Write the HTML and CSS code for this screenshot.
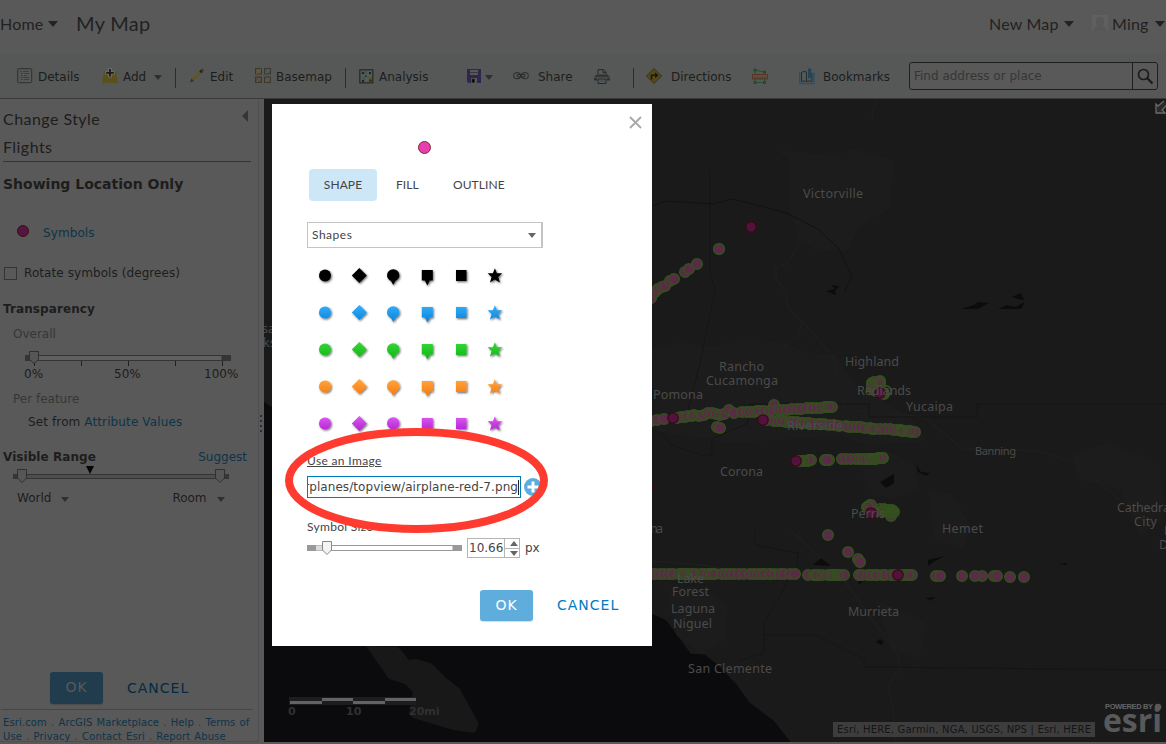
FILE: index.html
```html
<!DOCTYPE html>
<html lang="en">
<head>
<meta charset="utf-8">
<title>My Map</title>
<link rel="stylesheet" href="styles.css">
</head>
<body>
<div class="app">
  <header class="header">
    <span class="home">Home</span><i class="caret caret-dark"></i>
    <span class="map-title">My Map</span>
    <span class="new-map">New Map</span><i class="caret caret-dark"></i>
    <svg class="avatar" width="16" height="16" viewBox="0 0 16 16"><rect width="16" height="16" fill="#606060"/><path d="M1 16c0-4 4-4 4-5S4 9 4 6s1-4 4-4 4 1 4 4-1 4-1 5 4 1 4 5z" fill="#575757"/></svg>
    <span class="user">Ming</span><i class="caret caret-dark"></i>
  </header>
  <nav class="toolbar">
    <div class="tool t-details"><svg width="16" height="16" viewBox="0 0 16 16" fill="none"><rect x=".7" y=".7" width="14" height="14" rx="1" stroke="#2f3133"/><path d="M3 3.500h2m1 0h6M4 5.500h2m1 0h5M4 7.500h2m1 0h3M3 9.500h2m1 0h6M4 11.500h2m1 0h5" stroke="#26455a"/></svg><span>Details</span></div>
    <div class="tool t-add"><svg width="16" height="16" viewBox="0 0 16 16"><path d="M2 3l12 0 2 12.500q-8-2-16 0z" fill="#5b5118"/><path d="M8 0v9.500M3.200 4.800h9.600" stroke="#6c6a60" stroke-width="4"/><path d="M8 1v7.600M4.200 4.800h7.600" stroke="#1d1d1d" stroke-width="1.800"/></svg><span>Add</span><i class="caret caret-grey"></i></div>
    <i class="sep s1"></i>
    <div class="tool t-edit"><svg width="15" height="16" viewBox="0 0 15 16"><path d="M2.500 12L11 3.500" stroke="#635522" stroke-width="2.600"/><path d="M0 14.500l1.500-4 2.500 2.500z" fill="#37302a"/><path d="M10.300 4.200l1.600-1.600" stroke="#1c2432" stroke-width="3"/><path d="M11.800 2.700L13.300 1.200" stroke="#612f2b" stroke-width="2.800"/></svg><span>Edit</span></div>
    <div class="tool t-base"><svg width="16" height="16" viewBox="0 0 16 16"><g stroke="#3c3830"><rect x=".5" y=".5" width="6" height="5.500" fill="#5f5536"/><rect x="9.500" y=".5" width="6" height="5.500" fill="#46555a"/><rect x=".5" y="9" width="6" height="5.500" fill="#5b4738"/><rect x="9.500" y="9" width="6" height="5.500" fill="#52563a"/></g><path d="M1.500 5.500l4-4.500M10.500 5.500l4-4.500M1.500 14l4-4M10.500 14l4-4" stroke="#5a6462"/></svg><span>Basemap</span></div>
    <i class="sep s2"></i>
    <div class="tool t-ana"><svg width="15" height="15" viewBox="0 0 15 15"><rect x=".8" y=".8" width="13" height="13" fill="#4e5d5e" stroke="#2e2b24" stroke-width="1.300"/><path d="M2 2h3.500v3.500H2zM9 8h4v5H9z" fill="#5c552f"/><path d="M3 8l3 2-3 2M7 2v3M11 4v2" stroke="#3c5237" fill="none"/><path d="M3 3h2v2H3zM10 3h2v2h-2zM6 6.500h1.500v1.500H6zM3 11h2v2H3zM10.500 10.500h2v2h-2z" fill="#20231c"/></svg><span>Analysis</span></div>
    <div class="tool t-save"><svg width="14" height="14" viewBox="0 0 14 14"><path d="M0 0h14v14H1.500L0 12.500z" fill="#30274c"/><path d="M3 1h8v5H3zM4 9h6v5H4z" fill="#585858"/><path d="M3 3.500h8M5 10h2.500v3.500H5z" stroke="#303030" stroke-width=".8"/></svg><i class="caret caret-grey"></i></div>
    <div class="tool t-share"><svg width="16" height="8" viewBox="0 0 16 8" fill="none" stroke="#292929"><rect x=".7" y=".7" width="6.800" height="6" rx="2.500"/><rect x="8.500" y=".7" width="6.800" height="6" rx="2.500"/><rect x="4" y="2.500" width="8" height="2.400" rx="1"/></svg><span>Share</span></div>
    <div class="tool t-print"><svg width="16" height="15" viewBox="0 0 16 15"><path d="M4 5V.6h5.500L12 3v2M9 .6v3h3" stroke="#292929" fill="none"/><path d="M2.500 5.500h11L16 8v3.500h-3V9H3v2.500H0V8z" fill="#303030"/><path d="M0 8.300h16" stroke="#585858" stroke-width=".8"/><path d="M4 10h8v4.500H4z" fill="#565656" stroke="#292929"/><path d="M5.500 12h5" stroke="#285572"/></svg></div>
    <i class="sep s3"></i>
    <div class="tool t-dir"><svg width="16" height="16" viewBox="0 0 16 16"><path d="M8 .5L15.500 8 8 15.500.5 8z" fill="#574a17" stroke="#35301f"/><path d="M5.500 11.500V7.200h4.500" fill="none" stroke="#171717" stroke-width="1.600"/><path d="M9 4.200l3.400 3-3.400 3z" fill="#171717"/></svg><span>Directions</span></div>
    <div class="tool t-measure"><svg width="16" height="17" viewBox="0 0 16 17" fill="none"><path d="M3 2l9 2M3 2v12.500h9.500V4" stroke="#24502e"/><path d="M2 1h2v2H2zM11.500 3h2v2h-2zM2 13.500h2v2H2zM11.500 13.500h2v2h-2z" fill="#405242" stroke="#1e4829"/><path d="M.5 6.500h15v4.500H.5z" fill="#575048" stroke="#5b3520"/><path d="M3 11V9M5.500 11V9M8 11V9M10.500 11V9M13 11V9" stroke="#5b3520"/></svg></div>
    <div class="tool t-book"><svg width="16" height="17" viewBox="0 0 16 17" fill="none"><path d="M.7 4.500v11H15V4.500" stroke="#285069" stroke-width="1.300"/><path d="M2.500 13.500V4.500q2.500-2 5-.5v9.500q-2.500-1.200-5 0zM7.500 13.500q2.500-1.200 5.500 0V5" stroke="#2b2b2b"/><path d="M9 .5h3.200v10.500L10.600 9.800 9 11z" fill="#20445c"/></svg><span>Bookmarks</span></div>
    <div class="search"><span class="search-text">Find address or place</span><span class="search-btn"><svg width="17" height="17" viewBox="0 0 17 17" fill="none" stroke="#1c1c1c"><circle cx="6.500" cy="6.500" r="5" stroke-width="1.700"/><path d="M10 10l5.500 5.500" stroke-width="2.400"/></svg></span></div>
  </nav>
  <main class="main">
    <aside class="sidebar">
      <div class="side-head"><div><h1>Change Style</h1><h2>Flights</h2></div><i class="collapse"></i></div>
      <h3 class="section">Showing Location Only</h3>
      <div class="symbols"><i class="dot"></i><a>Symbols</a></div>
      <label class="rotate"><i class="checkbox"></i><span>Rotate symbols (degrees)</span></label>
      <h4 class="transparency">Transparency</h4>
      <div class="overall">Overall</div>
      <svg class="slider-a" width="250" height="16" viewBox="0 0 250 16"><rect x="25" y="4" width="206" height="6" fill="#353535"/><rect x="35" y="4.500" width="187" height="5" fill="#606060" stroke="#343434"/><path d="M34.500 11v4M81.500 10v5M128.500 10v5M175.500 10v5M222.500 10v5" stroke="#202020"/><path d="M29.500.5h9v8l-4.500 4-4.500-4z" fill="#565656" stroke="#303030"/></svg>
      <div class="ticks"><span>0%</span><span>50%</span><span>100%</span></div>
      <div class="per-feature">Per feature</div>
      <div class="set-from">Set from <a>Attribute Values</a></div>
      <div class="visible"><h4>Visible Range</h4><a>Suggest</a></div>
      <svg class="slider-b" width="250" height="18" viewBox="0 0 250 18"><rect x="13" y="9" width="216" height="5" fill="#363636"/><rect x="24" y="9.500" width="194" height="4" fill="#4e4e4e" stroke="#343434"/><path d="M86 1h8l-4 8z" fill="#050505"/><path d="M17.500 4.500h9v8.500l-4.500 4.500-4.500-4.500zM215.500 4.500h9v8.500l-4.500 4.500-4.500-4.500z" fill="#565656" stroke="#303030"/></svg>
      <div class="range"><span>World</span><i class="caret caret-grey"></i><span class="room">Room</span><i class="caret caret-grey"></i></div>
      <div class="side-actions"><span class="btn-ok dim">OK</span><span class="cancel">CANCEL</span></div>
      <footer class="links"><a>Esri.com</a> . <a>ArcGIS Marketplace</a> . <a>Help</a> . <a>Terms of</a><br><a>Use</a> . <a>Privacy</a> . <a>Contact Esri</a> . <a>Report Abuse</a></footer>
    </aside>
    <div class="splitter"><i></i><i></i><i></i><i></i></div>
    <svg class="map" width="902" height="643" viewBox="264 99 902 643">
      <defs>
        <marker id="f" markerUnits="userSpaceOnUse" markerWidth="14" markerHeight="14" refX="7" refY="7"><circle cx="7" cy="7" r="5.300" fill="#5a2b47" stroke="#34501f" stroke-width="1.500"/></marker>
        <marker id="g" markerUnits="userSpaceOnUse" markerWidth="14" markerHeight="14" refX="7" refY="7"><circle cx="7" cy="7" r="5.200" fill="none" stroke="#34501f" stroke-width="1.700"/></marker>
        <marker id="h" markerUnits="userSpaceOnUse" markerWidth="14" markerHeight="14" refX="7" refY="7"><circle cx="7" cy="7" r="5.200" fill="#53123e" stroke="#350c13" stroke-width="1.300"/></marker>
      </defs>
      <rect x="264" y="99" width="902" height="643" fill="#1a1a1a"/>
      <path d="M264 402l60 40 160 120 168 52 14 6 17 23 8 11h13l14 11 19 20 12 17 25 19 30 38H264z" fill="#0b0b0d"/>
      <path d="M366 646l32 1 11 13 7-1 15 4 14 14 15 12 7 13 12 22 -4 9-22-3-40-12-4-4 4-22-8-8-16-5z" fill="#181818"/>
      <g fill="#1c1c1c"><path d="M776 150l14 10v50l9 28 18 14 31-2 12-23 29-18 6-48-40-12-20 6zM652 350l28-8 30 5 31-9 44 5 20 9 30 2 20 30 40 24 18 12 14 21-58 4-27-9-110 7-76-12zM668 590l30-5 30 20-2 34-24 16-26-20zM856 460l30-10 28 14 5 26-26 8-20-2zM928 491l24 2 18 32-6 23-30-8zM1072 455l35-12 52 20 7 54-25 20-22-48-42-10zM874 599l52 24-6 36-28-10z"/></g>
      <g fill="none" stroke="#1f1f20" stroke-width="1.300"><path d="M846 170l-38 62-22 32-10 3v12l10 13 2 16 14 14-4 13-30 27-46 2-50 16M803 322l30 35 12 52 79 8 39 32 75 2 38 12 47 40M790 530l50 45 58 80 2 12-12 20 5 22 3 34M652 561l50 4 70 14M878 99q-6 8-6 20"/></g>
      <g fill="none" stroke="#121212"><path d="M652 206l15-5 46 3 20-5 54 14 32 17 20 19 13 28-8 15"/><path d="M710 170v100l5 20-15 73-12 47M660 432l11 13 31 10h10v-16l36-16 1-19h120v13h108v-13h190M755 530v15l43 8-1 12-33 58v30l-26 8M764 635h52l48 24v8l302 3" stroke="#151515"/></g>
      <path d="M826 291l9-2-4-4 8 1-4 5 1 4zM961 309l13-4 4-3 11 1-11 6zM998 309l9-4 8 2 10-5-4 7zM1012 297l9-4 3 7-6-1zM880 482l14-8v9l-8 5zM916 464l5 8 9 1-4 3-8-4zM928 560l17-4-10 5-7 5zM925 598l11-1-5 3 5 2zM1059 564l8-1v2zM813 565l8-7 10 8zM876 642l4-3 4 3-3 3zM858 580l5 1-4 4z" fill="#0c0c0c"/>
      <g class="place">
        <text x="803" y="198" textLength="60">Victorville</text><text x="845" y="366" textLength="54">Highland</text><text x="719" y="371" textLength="45">Rancho</text><text x="706" y="385" textLength="72">Cucamonga</text><text x="653" y="399" textLength="50">Pomona</text><text x="906" y="411" textLength="47">Yucaipa</text><text x="720" y="476" textLength="43">Corona</text><text x="975" y="455" textLength="41" class="small">Banning</text><text x="942" y="533" textLength="41">Hemet</text><text x="1117" y="512" textLength="56">Cathedral</text><text x="1134" y="526" textLength="23">City</text><text x="1159" y="549">D</text><text x="1164" y="535">P</text><text x="650" y="533" textLength="13">na</text><text x="262" y="333">sa</text><text x="263" y="347">ks</text>
        <text x="672" y="596" textLength="37">Forest</text><text x="671" y="613" textLength="44">Laguna</text><text x="673" y="628" textLength="39">Niguel</text><text x="848" y="616" textLength="51">Murrieta</text><text x="688" y="673" textLength="84">San Clemente</text>
      </g>
      <g class="flights">
        <polyline points="651,298 655,292 658,289 662,287 665,286 670,281 674,279 685,272 689,269 697,264"/>
        <polyline points="719,249 719,249"/>
        <polyline points="651,421 657,420 664,419 677,418 681,417 685,417 688,416 694,415 699,416 704,415 708,413 712,413 720,415 724,414 729,410 734,413 742,412 747,412 750,412 754,412 757,411 760,411 774,405 770,411 779,410 783,410 787,410 792,409 797,409 801,409 807,408 812,408 817,408 821,408 825,407 829,407 832,407"/>
        <polyline points="717,427 720,428"/>
        <polyline points="767,420 774,421 778,421 786,422 790,422 793,422 797,422 801,423 805,423 809,423 814,424 819,424 824,424 829,425 834,425 839,426 846,426 849,427 853,427 857,427 861,427 865,428 870,428 875,429 880,429 885,429 890,429 894,430 898,430 901,430 904,431 908,431 911,432 915,432"/>
        <polyline points="799,461 802,461 805,461 808,461 811,460 825,460 829,460 827,460 842,459 846,459 851,459 856,459 860,459 866,459 870,459 873,459 876,459 879,458 883,458"/>
        <polyline points="872,383 874,382 880,381 878,382 872,386 872,388 876,391 884,394 882,393 879,391"/>
        <polyline points="867,507 870,505 871,505 876,511 882,511 885,510 888,511 891,516 891,512 893,511"/>
        <polyline points="828,535 848,552 858,559 860,562"/>
        <polyline points="651,574 655,574 660,574 664,574 669,574 673,574 679,574 682,574 685,574 688,574 691,574 696,574 701,574 704,574 708,574 711,574 715,574 722,574 726,574 730,574 734,574 739,574 744,574 750,574 754,574 758,574 762,574 765,574 770,574 775,574 780,574 784,574 790,574 795,574"/>
        <polyline points="808,575 814,575 818,575 822,575 828,575 831,575 834,575 837,575 840,575 844,575 859,575 862,575 868,575 872,575 877,575 882,575 885,575 891,575 895,575 902,575 906,575 909,575 912,575"/>
        <polyline points="936,576 940,576 962,576 982,576 975,576 994,576 997,576 1010,577 1024,577"/>
      </g>
      <g class="trails"><polyline points="692,416 716,414 764,411 812,408 828,407"/><polyline points="782,421 802,423 820,424 872,429 902,431 910,431"/><polyline points="804,461 809,460 863,459 870,459 874,459 878,458 882,458"/><polyline points="880,384 872,385 874,390 883,393 886,391"/><polyline points="868,507 880,509 884,509 887,510 889,510 890,511 892,510 894,512 891,513 888,512"/><polyline points="684,574 692,574 712,574 770,574 816,575 832,575 838,575 876,575 908,575"/></g>
      <ellipse cx="891" cy="511" rx="6" ry="5.500" fill="#34501f"/>
      <g class="origins"><polyline points="751,227 673,418 763,420 796,461 880,393 871,513 898,575 648,488"/></g>
      <g class="place"><text x="857" y="395" textLength="54">Redlands</text><text x="787" y="430" textLength="56">Riverside</text><text x="851" y="518" textLength="34">Perris</text><text x="677" y="583" textLength="27">Lake</text></g>
      <g><rect x="289" y="697" width="127" height="8" fill="#1d1d1d"/><path d="M290 702.500h32M353 702.500h32" stroke="#636363" stroke-width="3"/><path d="M322 699.500h31M385 699.500h31" stroke="#636363" stroke-width="3"/></g>
      <g class="scale"><text x="288" y="715">0</text><text x="346" y="715">10</text><text x="409" y="715">20mi</text></g>
      <rect x="833" y="722" width="262" height="15" fill="#3d3d3d"/><text class="credit" x="837" y="733" textLength="254">Esri, HERE, Garmin, NGA, USGS, NPS | Esri, HERE</text>
      <text class="powered" x="1105" y="709" textLength="48">POWERED BY</text><text class="esri" x="1103" y="732" textLength="59" lengthAdjust="spacingAndGlyphs">esri</text><circle cx="1158" cy="707" r="3.300" fill="#595959"/>
      <path d="M1164 101l-6 5-2-2v9h9l-3-3 5-5" fill="#2a2a2a" stroke="#696969" stroke-width="1.300"/>
    </svg>
  </main>
</div>

<section class="dialog">
  <svg class="close" width="13" height="13" viewBox="0 0 13 13"><path d="M1 1l11 11M12 1L1 12" stroke="#a9a9a9" stroke-width="1.900"/></svg>
  <i class="dot preview"></i>
  <div class="tabs"><span class="tab active">SHAPE</span><span class="tab fill">FILL</span><span class="tab outline">OUTLINE</span></div>
  <div class="select"><span>Shapes</span><i class="caret"></i></div>
  <svg class="shapes" width="236" height="172" viewBox="307 262 236 172">
    <defs>
      <g id="row"><circle cx="325" cy="0" r="6"/><path d="M359.300-7.500l7.500 7.500-7.500 7.500L351.800 0z"/><path d="M387 0a6.200 6.200 0 1 1 12.400 0c0 3-2.500 4.500-4 5.500L393.200 9.500 391 5.500c-1.500-1-4-2.500-4-5.500z"/><path d="M421.800-5.500h11V5h-3L427.300 10 424.800 5H421.800z"/><rect x="456" y="-5.500" width="10.500" height="11"/><path d="M494.900-7.200l2 4.900h5.300l-4 3.700 1.700 5.500-5-3-5 3 1.700-5.500-4-3.700h5.300z"/></g>
      <filter id="s" x="-5%" y="-50%" width="110%" height="200%"><feDropShadow dx="1" dy="1.100" stdDeviation=".8" flood-color="#000" flood-opacity=".6"/></filter>
      <linearGradient id="g2" x1="0" y1="-7" x2="0" y2="8" gradientUnits="userSpaceOnUse"><stop stop-color="#32aef8"/><stop offset="1" stop-color="#0c87de"/></linearGradient>
      <linearGradient id="g3" x1="0" y1="-7" x2="0" y2="8" gradientUnits="userSpaceOnUse"><stop stop-color="#35d735"/><stop offset="1" stop-color="#13b81a"/></linearGradient>
      <linearGradient id="g4" x1="0" y1="-7" x2="0" y2="8" gradientUnits="userSpaceOnUse"><stop stop-color="#ffa63f"/><stop offset="1" stop-color="#f87c11"/></linearGradient>
      <linearGradient id="g5" x1="0" y1="-7" x2="0" y2="8" gradientUnits="userSpaceOnUse"><stop stop-color="#d95af0"/><stop offset="1" stop-color="#b61dd5"/></linearGradient>
    </defs>
    <g filter="url(#s)"><use href="#row" y="275.500"/><g transform="translate(0 312.500)" fill="url(#g2)"><use href="#row"/></g><g transform="translate(0 349.500)" fill="url(#g3)"><use href="#row"/></g><g transform="translate(0 386.500)" fill="url(#g4)"><use href="#row"/></g><g transform="translate(0 423.500)" fill="url(#g5)"><use href="#row"/></g></g>
  </svg>
  <div class="use-image">Use an Image</div>
  <div class="url-row"><div class="url"><span>rplanes/topview/airplane-red-7.png</span></div><svg width="18" height="18" viewBox="0 0 18 18"><circle cx="9" cy="9" r="9" fill="#5aaddd"/><path d="M9 3.500v11M3.500 9h11" stroke="#fff" stroke-width="3"/></svg></div>
  <div class="size-label">Symbol Size</div>
  <div class="size-row"><svg width="156" height="16" viewBox="0 0 156 16"><rect y="5" width="155" height="6" fill="#999"/><rect x="9" y="5.500" width="10" height="5" fill="#ddd"/><rect x="22" y="5.500" width="124" height="5" fill="#fff" stroke="#999"/><path d="M15.500 1.500h9V10L20 14.500 15.500 10z" fill="#f4f4f4" stroke="#888"/></svg><div class="number"><span>10.66</span><div class="spin"><i><b class="up"></b></i><i><b class="down"></b></i></div></div><span class="px">px</span></div>
  <div class="actions"><span class="btn-ok">OK</span><span class="cancel">CANCEL</span></div>
</section>
<svg class="ring" width="264" height="106" viewBox="0 0 264 106"><ellipse cx="131.500" cy="52.500" rx="127.500" ry="48.500" fill="none" stroke="#ff3b30" stroke-width="8"/></svg>
</body>
</html>
```
FILE: styles.css
```css
* { box-sizing: border-box; }
body { margin: 0; background: #595959; color: #1d1d1d; font: 12px/16px "DejaVu Sans", sans-serif; overflow: hidden; }
h1, h2, h3, h4 { margin: 0; }
i { display: block; flex: none; }
svg { display: block; flex: none; }
span, a { white-space: nowrap; }
a { color: #0e3448; }
.app { width: 1166px; height: 744px; display: flex; flex-direction: column; }

.header { height: 54px; display: flex; align-items: center; padding-bottom: 7px; font: 16px/20px Lato, sans-serif; color: #222; }
.header span { flex: none; }
.caret { width: 0; height: 0; border: 4px solid transparent; border-top: 5px solid #666; border-bottom: 0; }
.caret-dark { border: 5px solid transparent; border-top: 6px solid #222; border-bottom: 0; }
.caret-grey { border-top-color: #2f2f2f; }
.home { width: 48px; letter-spacing: .2px; }
.map-title { width: 913px; margin-left: 18px; padding-bottom: 2px; font-size: 20px; letter-spacing: .3px; }
.new-map { width: 75px; letter-spacing: .2px; }
.avatar { margin: 0 4px 2px 18px; }
.user { width: 43px; letter-spacing: .2px; }

.toolbar { height: 45px; flex: none; display: flex; align-items: center; background: #555857; border-bottom: 1px solid #3a3a3a; padding-left: 17px; }
.tool { display: flex; align-items: center; flex: none; }
.tool span { margin-left: 5px; padding-top: 2px; }
.tool .caret { margin-left: 8px; margin-top: 3px; }
.t-details { width: 85px; }
.t-add { width: 73px; }
.sep { width: 1px; height: 20px; margin-top: 3px; background: #2b2b2b; }
.s1 { margin-right: 14px; }
.t-edit { width: 65px; }
.t-base { width: 90px; }
.s2 { margin-right: 13px; }
.t-ana { width: 108px; }
.t-save { width: 46px; }
.t-save .caret { margin-left: 4px; }
.t-share { width: 81px; }
.t-share span { margin-left: 9px; }
.t-print { width: 39px; }
.s3 { margin-right: 12px; }
.t-dir { width: 106px; }
.t-dir span { margin-left: 9px; }
.t-book span { margin-left: 8px; }
.t-measure { width: 47px; }
.t-book { width: 110px; }
.search { width: 249px; height: 28px; border: 1px solid #1f1f1f; border-radius: 3px; background: #595959; color: #363636; display: flex; align-items: center; padding-left: 4px; }
.search-text { flex: 1; }
.search-btn { width: 25px; height: 26px; border-left: 1px solid #1f1f1f; display: flex; align-items: center; justify-content: center; }

.main { display: flex; height: 643px; }
.sidebar { width: 259px; border-right: 1px solid #4f4f4f; border-bottom: 1px solid #4f4f4f; padding-left: 3px; height: 643px; display: flex; flex-direction: column; align-items: flex-start; }
.side-head { width: 248px; height: 65px; border-bottom: 1px solid #343434; display: flex; justify-content: space-between; padding-top: 6px; }
.side-head { height: 66px; }
.side-head h1, .side-head h2 { font: 16px/28px Lato, sans-serif; height: 28px; letter-spacing: .45px; }
.collapse { width: 0; height: 0; border: 6px solid transparent; border-right: 6px solid #353535; border-left: 0; margin: 5px 3px 0 0; }
.section { font: bold 14px/18px "DejaVu Sans", sans-serif; margin-top: 13px; }
.symbols { height: 18px; display: flex; align-items: center; margin: 29px 0 0 14px; }
.dot { width: 12px; height: 12px; border-radius: 50%; background: #56143f; border: 1px solid #3b1115; }
.symbols a { margin-left: 14px; padding-top: 3px; letter-spacing: .1px; }
.symbols .dot { margin-bottom: 1px; }
.rotate { display: flex; align-items: center; margin: 25px 0 0 1px; letter-spacing: .08px; }
.checkbox { width: 13px; height: 13px; border: 1px solid #343434; margin-right: 7px; }
.transparency { margin-top: 20px; font: bold 12px/16px "DejaVu Sans", sans-serif; letter-spacing: .1px; }
.overall, .per-feature { color: #363636; margin: 9px 0 0 10px; }
.slider-a { margin: 9px 0 0 -3px; }
.ticks { display: grid; grid-template-columns: 90px 90px 40px; margin-left: 21px; margin-top: -1px; }
.per-feature { margin-top: 9px; }
.set-from { margin: 7px 0 0 25px; letter-spacing: .12px; }
.visible { width: 244px; display: flex; justify-content: space-between; margin-top: 19px; }
.visible h4 { font: bold 12px/16px "DejaVu Sans", sans-serif; letter-spacing: .06px; }
.slider-b { margin: 0 0 0 -3px; }
.range { display: flex; align-items: center; margin: 7px 0 0 14px; }
.range .caret { margin-left: 10px; margin-top: 2px; }
.room { margin-left: 103px; }
.side-actions { display: flex; align-items: center; margin: 166px 0 0 47px; }
.btn-ok { width: 53px; height: 31px; border-radius: 3px; background: #5eaddd; color: #fff; text-align: center; font: 14px/31px "DejaVu Sans", sans-serif; letter-spacing: .8px; box-shadow: 0 1px 1px rgba(0,0,0,.15); }
.dim { height: 32px; background: #213c4d; color: #595959; }
.cancel { margin: -1px 0 0 24px; color: #007ac2; font: 14px/20px "DejaVu Sans", sans-serif; letter-spacing: 1px; }
.side-actions .cancel { margin-top: -1px; color: #002b45; }
.links { width: 252px; margin: 5px 0 0 -2px; padding: 6px 0 0 2px; border-top: 1px solid #464646; font-size: 10px; line-height: 14px; color: #363636; letter-spacing: .12px; word-spacing: .8px; white-space: nowrap; }
.splitter { width: 5px; display: flex; flex-direction: column; gap: 3px; padding: 316px 0 0 1px; }
.splitter i { width: 2px; height: 2px; background: #2c2c2c; }

.map { font-family: "Noto Sans", sans-serif; }
.place { fill: #4b4b4b; font-size: 12.500px; }
.place .small { font-size: 11px; }
.flights polyline, .trails polyline, .origins polyline { fill: none; stroke: none; }
.flights polyline { marker-start: url(#f); marker-mid: url(#f); marker-end: url(#f); }
.trails polyline { marker-start: url(#g); marker-mid: url(#g); marker-end: url(#g); }
.origins polyline { marker-start: url(#h); marker-mid: url(#h); marker-end: url(#h); }
.scale { font: bold 11px "DejaVu Sans", sans-serif; fill: #303030; }
.credit { font: 10px "DejaVu Sans", sans-serif; fill: #141414; }
.powered { font: bold 7.500px "Liberation Sans", sans-serif; fill: #656565; }
.esri { font: bold 32px "Open Sans", sans-serif; fill: #595959; }

.dialog { position: absolute; left: 272px; top: 104px; width: 380px; height: 542px; background: #fff; color: #444; padding-left: 35px; display: flex; flex-direction: column; align-items: flex-start; }
.close { margin: 12px 0 0 321.500px; }
.preview { width: 13px; height: 13px; background: #e83faf; border: 1px solid #84262c; margin: 12px 0 0 111px; }
.tabs { display: flex; align-items: center; margin: 15px 0 0 2px; font: 12px/32px Lato, sans-serif; letter-spacing: .08px; }
.tab { height: 32px; }
.active { width: 68px; border-radius: 4px; background: #cde6f8; text-align: center; }
.fill { width: 57px; margin-left: 19px; }
.select { width: 236px; height: 26px; border: 1px solid #c4c4c4; border-right-width: 2px; margin-top: 21px; display: flex; align-items: center; justify-content: space-between; padding: 0 5px 0 4px; font: 12px/24px Lato, sans-serif; letter-spacing: .5px; }
.select .caret { border-left-width: 4.500px; border-right-width: 4.500px; }
.shapes { margin-top: 14px; }
.use-image { font: 12px/16px Lato, sans-serif; text-decoration: underline; letter-spacing: .35px; margin-top: 19px; }
.url-row { display: flex; align-items: center; gap: 3px; margin-top: 7px; }
.url { width: 214px; height: 22px; border: 1px solid #0079c1; display: flex; justify-content: flex-end; align-items: center; overflow: hidden; padding-right: 1px; }
.url span { border-right: 1px solid #222; line-height: 15px; letter-spacing: .07px; }
.size-label { font: 12px/16px Lato, sans-serif; letter-spacing: .3px; margin-top: 21px; }
.size-row { display: flex; align-items: center; height: 20px; margin-top: 3px; }
.number { width: 53px; height: 20px; margin-left: 4px; border: 1px solid #b5b5b5; display: flex; justify-content: space-between; line-height: 19px; }
.number > span { padding-left: 1px; }
.spin { width: 15px; border-left: 1px solid #b5b5b5; display: flex; flex-direction: column; }
.spin i { height: 9px; display: flex; align-items: center; justify-content: center; padding-left: 3px; }
.spin i + i { border-top: 1px solid #b5b5b5; }
.spin b { width: 0; height: 0; border: 4px solid transparent; }
.spin .up { border-bottom: 5px solid #666; border-top: 0; }
.spin .down { border-top: 5px solid #666; border-bottom: 0; }
.px { margin-left: 5px; }
.actions { display: flex; align-items: center; margin: 32px 0 0 173px; }
.ring { position: absolute; left: 285px; top: 428px; }
```
